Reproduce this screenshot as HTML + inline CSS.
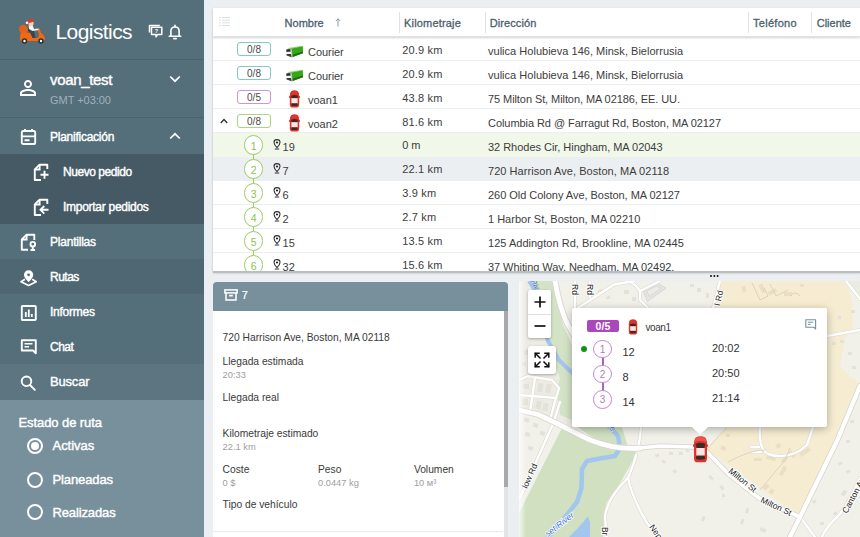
<!DOCTYPE html>
<html>
<head>
<meta charset="utf-8">
<style>
*{box-sizing:border-box;margin:0;padding:0}
html,body{width:860px;height:537px;overflow:hidden;background:#eceff1;font-family:"Liberation Sans",sans-serif;}
.abs{position:absolute}
#side{position:absolute;left:0;top:0;width:203.500px;height:537px;background:#546e7a;color:#fff;overflow:hidden}
#side .band{position:absolute;left:0;width:204px}
#side .t{position:absolute;white-space:nowrap;color:#fff;-webkit-text-stroke:0.4px #fff}
#side svg{position:absolute}
#tbl{position:absolute;left:213px;top:8px;width:647px;height:263.500px;background:#fff;overflow:hidden;box-shadow:0 1px 2px rgba(0,0,0,.25)}
#tbl .row{position:absolute;left:0;width:647px;height:24px;border-bottom:1px solid #e4e7e9}
#tbl .c{position:absolute;white-space:nowrap;font-size:11px;color:#3c3c3c;line-height:13px}
#tbl .h{color:#4a616c;-webkit-text-stroke:0.3px #4a616c}
.badge{position:absolute;left:24px;width:34px;height:13.500px;border:1px solid #80cbc4;border-radius:3px;font-size:10px;line-height:13px;text-align:center;color:#4a4a4a;background:#fff}
.circ{position:absolute;width:19.500px;height:19.500px;border:1.200px solid #9ccc65;border-radius:50%;font-size:10.500px;line-height:20px;text-align:center;color:#8bc34a;background:#fff}
#det{position:absolute;left:213px;top:281.500px;width:295px;height:256px;background:#fff;overflow:hidden;border-radius:3px 3px 0 0}
#det .l{position:absolute;white-space:nowrap;font-size:10.250px;line-height:12px;color:#3a3a3a}
#det .v{position:absolute;white-space:nowrap;font-size:9.300px;line-height:11px;color:#9e9e9e}
#map{position:absolute;left:519px;top:281px;width:341px;height:256px;background:#f1f0ea;overflow:hidden}
</style>
</head>
<body>
<div id="side">
  <div class="band" style="top:59px;height:1px;background:#4b636e"></div>
  <div class="band" style="top:117px;height:1px;background:#4b636e"></div>
  <div class="band" style="top:154px;height:70px;background:#455a64"></div>
  <div class="band" style="top:259px;height:35px;background:#4e6772"></div>
  <div class="band" style="top:364px;height:36px;background:#5c7581"></div>
  <div class="band" style="top:400px;height:137px;background:#78909c"></div>

  <div class="t" style="left:55.500px;top:19px;font-size:21px;line-height:26px;-webkit-text-stroke:0;letter-spacing:-0.58px">Logistics</div>
  <div class="t" style="left:50px;top:71px;font-size:15px;line-height:18px;letter-spacing:-0.34px">voan_test</div>
  <div class="t" style="left:50px;top:93.700px;font-size:11px;line-height:13px;color:#9fb1ba;-webkit-text-stroke:0;letter-spacing:-0.03px">GMT +03:00</div>
  <div class="t" style="left:50px;top:129.500px;font-size:12px;line-height:14px;letter-spacing:-0.25px">Planificación</div>
  <div class="t" style="left:63px;top:164.500px;font-size:12px;line-height:14px;letter-spacing:-0.45px">Nuevo pedido</div>
  <div class="t" style="left:63px;top:199.500px;font-size:12px;line-height:14px;letter-spacing:-0.28px">Importar pedidos</div>
  <div class="t" style="left:50px;top:234.500px;font-size:12px;line-height:14px;letter-spacing:-0.22px">Plantillas</div>
  <div class="t" style="left:50px;top:269.500px;font-size:12px;line-height:14px;letter-spacing:-0.5px">Rutas</div>
  <div class="t" style="left:50px;top:304.500px;font-size:12px;line-height:14px;letter-spacing:-0.24px">Informes</div>
  <div class="t" style="left:50px;top:339.500px;font-size:12px;line-height:14px;letter-spacing:-0.5px">Chat</div>
  <div class="t" style="left:50px;top:373.500px;font-size:13px;line-height:16px;letter-spacing:-0.18px">Buscar</div>
  <div class="t" style="left:18.500px;top:415px;font-size:13px;line-height:16px;letter-spacing:-0.08px">Estado de ruta</div>
  <div class="t" style="left:52.500px;top:438px;font-size:13px;line-height:16px;letter-spacing:-0.04px">Activas</div>
  <div class="t" style="left:52.500px;top:472px;font-size:13px;line-height:16px;letter-spacing:-0.11px">Planeadas</div>
  <div class="t" style="left:52.500px;top:504.500px;font-size:13px;line-height:16px;letter-spacing:-0.13px">Realizadas</div>

  <!-- logo scooter -->
  <svg style="left:17px;top:16px" width="30" height="30" viewBox="0 0 30 30">
    <ellipse cx="6.5" cy="13.5" rx="4.2" ry="4.8" fill="#e8601c" transform="rotate(-20 6.5 13.5)"/>
    <path d="M3 21.5 Q2.5 17 7 16.5 L13 17 L16 22 L21 22 L23 16.5 Q27.5 18 28 23.5 L26 25 L5 25 Q2.5 24.5 3 21.5Z" fill="#f4690f"/>
    <path d="M20 13 L22.5 12.5 L24.5 18 L22.5 19Z" fill="#f4690f"/>
    <circle cx="7.5" cy="25" r="2.7" fill="#263238"/><circle cx="7.5" cy="25" r="1.2" fill="#fff"/>
    <circle cx="24" cy="25" r="2.7" fill="#263238"/><circle cx="24" cy="25" r="1.2" fill="#fff"/>
    <path d="M11 10 L15 9.5 L17.5 17 L18.5 22 L15.5 22 L13.5 17 L11 15Z" fill="#37474f"/>
    <path d="M11.5 9.5 L15.5 9 L17 13 L21.5 12.5 L21.5 14 L15.5 15 L12 13Z" fill="#f5f5f5"/>
    <circle cx="14" cy="7.2" r="2.6" fill="#f7d2b8"/>
    <path d="M10.5 6.5 Q11.5 2.5 15 3 Q17 3.5 17 5.5 L11 7.5Z" fill="#e53a1d"/>
    <circle cx="10" cy="6.8" r="1.3" fill="#fff"/>
  </svg>
  <!-- chat multi icon -->
  <svg style="left:148px;top:24px" width="16" height="16" viewBox="0 0 16 16" fill="none" stroke="#fff" stroke-width="1.5">
    <path d="M3.5 3.2 H13.8 V10.5 H9.5 L8 12.8 V10.5 H3.5Z" stroke-linejoin="round"/>
    <path d="M11.8 1.5 H1.5 V8.5" stroke-linejoin="round"/>
    <text x="6.7" y="9.3" font-size="5.5" fill="#fff" stroke="none" font-family="Liberation Sans" font-weight="bold">?</text>
  </svg>
  <!-- bell -->
  <svg style="left:167px;top:22.500px" width="16" height="18" viewBox="0 0 16 18" fill="none" stroke="#fff" stroke-width="1.6">
    <path d="M2.2 13.2 H13.8 M3.9 13 V8.2 Q3.9 4 8 4 Q12.1 4 12.1 8.2 V13" stroke-linejoin="round" stroke-linecap="round"/>
    <path d="M8 3.8 V2.4" stroke-linecap="round"/>
    <path d="M6.9 15.6 H9.1" stroke-linecap="round" stroke-width="1.8"/>
  </svg>
  <!-- person -->
  <svg style="left:16.4px;top:76px" width="24" height="24" viewBox="0 0 24 24" fill="#fff">
    <path d="M12 5.9c1.16 0 2.1.94 2.1 2.1s-.94 2.1-2.1 2.1S9.900 9.160 9.900 8s.94-2.1 2.1-2.1m0 9c2.97 0 6.1 1.460 6.1 2.1v1.100H5.900V17c0-.64 3.130-2.1 6.1-2.1M12 4C9.790 4 8 5.790 8 8s1.790 4 4 4 4-1.790 4-4-1.790-4-4-4zm0 9c-2.670 0-8 1.340-8 4v3h16v-3c0-2.660-5.330-4-8-4z"/>
  </svg>
  <!-- chevrons -->
  <svg style="left:169px;top:75px" width="12" height="8" viewBox="0 0 12 8" fill="none" stroke="#fff" stroke-width="1.7"><path d="M1.2 1.5 L6 6.2 L10.800 1.5"/></svg>
  <svg style="left:169px;top:132px" width="12" height="8" viewBox="0 0 12 8" fill="none" stroke="#fff" stroke-width="1.7"><path d="M1.2 6.5 L6 1.8 L10.800 6.5"/></svg>
  <!-- calendar -->
  <svg style="left:20px;top:128px" width="17" height="18" viewBox="0 0 17 18" fill="none" stroke="#fff" stroke-width="1.9">
    <rect x="1.8" y="3" width="13.4" height="13" rx="1.6"/>
    <path d="M5 1 V4 M12 1 V4 M1.8 8.400 H15.2 M4.500 12.300 H9.500" />
  </svg>
  <!-- new order -->
  <svg style="left:33px;top:163px" width="17" height="19" viewBox="0 0 17 19" fill="none" stroke="#fff" stroke-width="1.9">
    <path d="M14.300 6 V1.8 H6.300 L1.800 6.300 V17 H8" stroke-linejoin="round"/>
    <path d="M6.600 2 V6.500 H2" />
    <path d="M7.500 11.800 H15.500 M11.500 7.800 V15.800"/>
  </svg>
  <!-- import -->
  <svg style="left:33px;top:198px" width="17" height="19" viewBox="0 0 17 19" fill="none" stroke="#fff" stroke-width="1.9">
    <path d="M14.300 6 V1.8 H6.300 L1.800 6.300 V17 H8" stroke-linejoin="round"/>
    <path d="M6.600 2 V6.500 H2" />
    <path d="M7.500 11.800 H15.500 M11.300 8 L7.500 11.800 L11.300 15.600"/>
  </svg>
  <!-- plantillas -->
  <svg style="left:20px;top:233px" width="18" height="19" viewBox="0 0 18 19" fill="none" stroke="#fff" stroke-width="1.9">
    <path d="M14.300 7 V1.8 H6.300 L1.800 6.300 V16.800 H8" stroke-linejoin="round"/>
    <path d="M6.600 2 V6.500 H2" />
    <circle cx="12.800" cy="11.200" r="2.300"/>
    <path d="M12.800 13.500 V16.800 M10.500 17 H15.100"/>
  </svg>
  <!-- rutas -->
  <svg style="left:19px;top:269.800px" width="20" height="17" viewBox="0 0 20 17" fill="none" stroke="#fff" stroke-width="1.7">
    <path d="M9.600 1.200 C12 1.200 13.400 3 13.400 4.700 C13.400 7 9.600 11 9.600 11 C9.600 11 5.800 7 5.800 4.700 C5.800 3 7.200 1.200 9.600 1.200Z" fill="#fff"/>
    <circle cx="9.600" cy="4.800" r="1.400" fill="#4e6772" stroke="none"/>
    <path d="M6 9.200 L2 11.800 L9.600 15.500 L17.200 11.800 L13.200 9.200" stroke-linejoin="round"/>
  </svg>
  <!-- informes -->
  <svg style="left:20px;top:304px" width="18" height="18" viewBox="0 0 18 18" fill="none" stroke="#fff" stroke-width="1.9">
    <rect x="1.800" y="2" width="14" height="14" rx="0.8"/>
    <path d="M5.800 13 V8 M8.800 13 V5.500 M11.800 13 V10" stroke-width="1.8"/>
  </svg>
  <!-- chat -->
  <svg style="left:20px;top:338px" width="18" height="18" viewBox="0 0 18 18" fill="none" stroke="#fff" stroke-width="1.9">
    <path d="M1.800 2.300 H15.800 V15.200 L13 12.500 H1.800Z" stroke-linejoin="round"/>
    <path d="M4.500 5.800 H12.500 M4.500 8.800 H9" stroke-width="1.6"/>
  </svg>
  <!-- search -->
  <svg style="left:19px;top:373px" width="18" height="18" viewBox="0 0 18 18" fill="none" stroke="#fff" stroke-width="1.9">
    <circle cx="7.500" cy="8.300" r="4.800"/>
    <path d="M11 12 L15.800 16.800" stroke-linecap="round"/>
  </svg>
  <!-- radios -->
  <div style="position:absolute;left:27px;top:438px;width:16px;height:16px;border:2px solid #fff;border-radius:50%"></div>
  <div style="position:absolute;left:31px;top:442px;width:8px;height:8px;background:#fff;border-radius:50%"></div>
  <div style="position:absolute;left:27px;top:472px;width:16px;height:16px;border:2px solid #fff;border-radius:50%"></div>
  <div style="position:absolute;left:27px;top:504px;width:16px;height:16px;border:2px solid #fff;border-radius:50%"></div>
</div>

<div id="tbl">
<div class="abs" style="left:0;top:0;width:647px;height:29px;background:#fff;border-bottom:1px solid #dfe3e6;box-shadow:0 1px 2px rgba(0,0,0,.18)"></div>
<svg class="abs" style="left:6px;top:7.500px" width="11.500" height="11" viewBox="0 0 13 12" stroke="#d3dade" stroke-width="1" fill="none"><path d="M0 1.500 H2 M3.500 1.500 H12.500 M0 4.500 H2 M3.500 4.500 H12.500 M0 7.500 H2 M3.500 7.500 H12.500 M0 10.500 H2 M3.500 10.500 H12.500"/></svg>
<div class="c h" style="margin-top:0.800px;left:71.6px;top:8.4px;letter-spacing:0px">Nombre</div>
<div class="c h" style="margin-top:0.800px;left:191px;top:8.4px;letter-spacing:0.18px">Kilometraje</div>
<div class="c h" style="margin-top:0.800px;left:276.7px;top:8.4px;letter-spacing:0.1px">Dirección</div>
<div class="c h" style="margin-top:0.800px;left:540px;top:8.4px;letter-spacing:0.28px">Teléfono</div>
<div class="c h" style="margin-top:0.800px;left:603.7px;top:8.4px;letter-spacing:0.01px">Cliente</div>
<svg class="abs" style="left:121.500px;top:9.500px" width="6" height="9" viewBox="0 0 6 9" fill="none" stroke="#78909c" stroke-width="0.900"><path d="M3 8.500 V0.800 M0.800 3 L3 0.800 L5.200 3"/></svg>
<div class="abs" style="left:186px;top:4px;width:1px;height:21px;background:#dfe3e6"></div>
<div class="abs" style="left:272.3px;top:4px;width:1px;height:21px;background:#dfe3e6"></div>
<div class="abs" style="left:534.8px;top:4px;width:1px;height:21px;background:#dfe3e6"></div>
<div class="abs" style="left:598.4px;top:4px;width:1px;height:21px;background:#dfe3e6"></div>
<div class="abs" style="left:0;top:52.5px;width:647px;height:1px;background:#eceeef;margin-top:-0.800px"></div>
<div class="badge" style="top:34px;border-color:#80cbc4">0/8</div>
<svg style="position:absolute;left:72px;top:38px" width="19" height="12" viewBox="0 0 19 12">
<path d="M1.200 3.500 L4.200 1.700 L16.200 0 L17.800 0.400 L5.500 2.900Z" fill="#8fdc6c"/>
<path d="M5.500 2.800 L17.800 0.300 L18 7 L6.500 11.200Z" fill="#35a818"/>
<path d="M6.200 9 L18 5.400 L18 7.200 L6.500 11.400Z" fill="#1f6e10"/>
<path d="M1.300 3.600 L5.500 2.900 L5.800 5.700 L1.400 6.100Z" fill="#2b2b2b"/>
<path d="M1.400 6.100 L5.800 5.700 L6 7.900 L1.500 7.900Z" fill="#f2f2f2"/>
<path d="M1.500 7.900 L6 7.900 L6.500 11.300 L1.600 9.600Z" fill="#3a3a3a"/>
<path d="M5.500 2.900 L6.700 3.300 L7.600 10.800 L6.500 11.300Z" fill="#c9d3c9"/>
</svg>
<div class="c" style="left:95px;top:37.7px;letter-spacing:-0.05px">Courier</div>
<div class="c" style="left:189.2px;top:35.7px;letter-spacing:0.17px">20.9 km</div>
<div class="c" style="left:275px;top:37.2px;letter-spacing:0.02px">vulica Holubieva 146, Minsk, Bielorrusia</div>
<div class="abs" style="left:0;top:76.5px;width:647px;height:1px;background:#eceeef;margin-top:-0.800px"></div>
<div class="badge" style="top:58px;border-color:#80cbc4">0/8</div>
<svg style="position:absolute;left:72px;top:62px" width="19" height="12" viewBox="0 0 19 12">
<path d="M1.200 3.500 L4.200 1.700 L16.200 0 L17.800 0.400 L5.500 2.900Z" fill="#8fdc6c"/>
<path d="M5.500 2.800 L17.800 0.300 L18 7 L6.500 11.200Z" fill="#35a818"/>
<path d="M6.200 9 L18 5.400 L18 7.200 L6.500 11.400Z" fill="#1f6e10"/>
<path d="M1.300 3.600 L5.500 2.900 L5.800 5.700 L1.400 6.100Z" fill="#2b2b2b"/>
<path d="M1.400 6.100 L5.800 5.700 L6 7.900 L1.500 7.900Z" fill="#f2f2f2"/>
<path d="M1.500 7.900 L6 7.900 L6.500 11.300 L1.600 9.600Z" fill="#3a3a3a"/>
<path d="M5.500 2.900 L6.700 3.300 L7.600 10.800 L6.500 11.300Z" fill="#c9d3c9"/>
</svg>
<div class="c" style="left:95px;top:61.7px;letter-spacing:-0.05px">Courier</div>
<div class="c" style="left:189.2px;top:59.7px;letter-spacing:0.17px">20.9 km</div>
<div class="c" style="left:275px;top:61.2px;letter-spacing:0.02px">vulica Holubieva 146, Minsk, Bielorrusia</div>
<div class="abs" style="left:0;top:100.5px;width:647px;height:1px;background:#eceeef;margin-top:-0.800px"></div>
<div class="badge" style="top:82px;border-color:#ce93d8">0/5</div>
<svg style="position:absolute;left:76.3px;top:81.5px" width="11" height="18" viewBox="0 0 11 18">
<path d="M2.200 1.200 Q5.500 -0.600 8.800 1.200 Q10.300 2.500 10.200 6 L10.200 14.500 Q10.200 17 8.500 17.400 L2.500 17.400 Q0.800 17 0.800 14.500 L0.800 6 Q0.700 2.500 2.200 1.200Z" fill="#e0342b"/>
<path d="M2 5.800 Q5.500 4.200 9 5.800 L8.400 8.200 L2.600 8.200Z" fill="#3b2b2b"/>
<rect x="2.400" y="8.200" width="6.200" height="5" fill="#fbe9e7"/>
<path d="M2.500 13.400 L8.500 13.400 L8.800 15.400 Q5.500 16.400 2.200 15.400Z" fill="#3b2b2b"/>
<rect x="0" y="6.200" width="1.200" height="1.600" fill="#c62828"/><rect x="9.800" y="6.200" width="1.200" height="1.600" fill="#c62828"/>
</svg>
<div class="c" style="left:95px;top:85.7px;letter-spacing:0px">voan1</div>
<div class="c" style="left:189.2px;top:83.7px;letter-spacing:0.17px">43.8 km</div>
<div class="c" style="left:275px;top:85.2px;letter-spacing:-0.08px">75 Milton St, Milton, MA 02186, EE. UU.</div>
<div class="abs" style="left:0;top:124.5px;width:647px;height:1px;background:#eceeef;margin-top:-0.800px"></div>
<div class="badge" style="top:106px;border-color:#aed581">0/8</div>
<svg style="position:absolute;left:76.3px;top:105.5px" width="11" height="18" viewBox="0 0 11 18">
<path d="M2.200 1.200 Q5.500 -0.600 8.800 1.200 Q10.300 2.500 10.200 6 L10.200 14.500 Q10.200 17 8.500 17.400 L2.500 17.400 Q0.800 17 0.800 14.500 L0.800 6 Q0.700 2.500 2.200 1.200Z" fill="#e0342b"/>
<path d="M2 5.800 Q5.500 4.200 9 5.800 L8.400 8.200 L2.600 8.200Z" fill="#3b2b2b"/>
<rect x="2.400" y="8.200" width="6.200" height="5" fill="#fbe9e7"/>
<path d="M2.500 13.400 L8.500 13.400 L8.800 15.400 Q5.500 16.400 2.200 15.400Z" fill="#3b2b2b"/>
<rect x="0" y="6.200" width="1.200" height="1.600" fill="#c62828"/><rect x="9.800" y="6.200" width="1.200" height="1.600" fill="#c62828"/>
</svg>
<div class="c" style="left:95px;top:109.7px;letter-spacing:0px">voan2</div>
<div class="c" style="left:189.2px;top:107.7px;letter-spacing:0.17px">81.6 km</div>
<div class="c" style="left:275px;top:109.2px;letter-spacing:-0.06px">Columbia Rd @ Farragut Rd, Boston, MA 02127</div>
<svg class="abs" style="left:7px;top:109.7px" width="8" height="6" viewBox="0 0 8 6" fill="none" stroke="#333" stroke-width="1.400"><path d="M0.800 5 L4 1.600 L7.200 5"/></svg>
<div class="abs" style="left:0;top:125px;width:647px;height:24px;background:#f1f8e9"></div>
<div class="abs" style="left:0;top:149px;width:647px;height:24px;background:#eceff1"></div>
<div class="abs" style="left:0;top:173px;width:647px;height:24px;background:#fff;border-bottom:1px solid #eceeef"></div>
<div class="abs" style="left:0;top:197px;width:647px;height:24px;background:#fff;border-bottom:1px solid #eceeef"></div>
<div class="abs" style="left:0;top:221px;width:647px;height:24px;background:#fff;border-bottom:1px solid #eceeef"></div>
<div class="abs" style="left:0;top:245px;width:647px;height:24px;background:#fff;border-bottom:1px solid #eceeef"></div>
<div class="abs" style="left:39.8px;top:146px;width:1.500px;height:6px;background:#9ccc65"></div>
<div class="circ" style="left:30.8px;top:127.2px">1</div>
<svg style="position:absolute;left:60.3px;top:131.2px" width="8" height="11" viewBox="0 0 8 11" fill="none" stroke="#2a2a2a" stroke-width="1.050">
<path d="M4 0.600 C6 0.600 7 2 7 3.400 C7 5.400 4 8.600 4 8.600 C4 8.600 1 5.400 1 3.400 C1 2 2 0.600 4 0.600Z"/>
<circle cx="4" cy="3.500" r="1.100" fill="#222" stroke="none"/>
<path d="M1.800 10 H6.200" stroke-width="1"/>
</svg>
<div class="c" style="left:69.6px;top:133.3px">19</div>
<div class="c" style="left:189.2px;top:131.0px;letter-spacing:0px">0 m</div>
<div class="c" style="left:275px;top:132.5px;letter-spacing:-0.03px">32 Rhodes Cir, Hingham, MA 02043</div>
<div class="abs" style="left:39.8px;top:170px;width:1.500px;height:6px;background:#9ccc65"></div>
<div class="circ" style="left:30.8px;top:151.2px">2</div>
<svg style="position:absolute;left:60.3px;top:155.2px" width="8" height="11" viewBox="0 0 8 11" fill="none" stroke="#2a2a2a" stroke-width="1.050">
<path d="M4 0.600 C6 0.600 7 2 7 3.400 C7 5.400 4 8.600 4 8.600 C4 8.600 1 5.400 1 3.400 C1 2 2 0.600 4 0.600Z"/>
<circle cx="4" cy="3.500" r="1.100" fill="#222" stroke="none"/>
<path d="M1.800 10 H6.200" stroke-width="1"/>
</svg>
<div class="c" style="left:69.6px;top:157.3px">7</div>
<div class="c" style="left:189.2px;top:155.0px;letter-spacing:0.17px">22.1 km</div>
<div class="c" style="left:275px;top:156.5px;letter-spacing:0.05px">720 Harrison Ave, Boston, MA 02118</div>
<div class="abs" style="left:39.8px;top:194px;width:1.500px;height:6px;background:#9ccc65"></div>
<div class="circ" style="left:30.8px;top:175.2px">3</div>
<svg style="position:absolute;left:60.3px;top:179.2px" width="8" height="11" viewBox="0 0 8 11" fill="none" stroke="#2a2a2a" stroke-width="1.050">
<path d="M4 0.600 C6 0.600 7 2 7 3.400 C7 5.400 4 8.600 4 8.600 C4 8.600 1 5.400 1 3.400 C1 2 2 0.600 4 0.600Z"/>
<circle cx="4" cy="3.500" r="1.100" fill="#222" stroke="none"/>
<path d="M1.800 10 H6.200" stroke-width="1"/>
</svg>
<div class="c" style="left:69.6px;top:181.3px">6</div>
<div class="c" style="left:189.2px;top:179.0px;letter-spacing:0.17px">3.9 km</div>
<div class="c" style="left:275px;top:180.5px;letter-spacing:-0.03px">260 Old Colony Ave, Boston, MA 02127</div>
<div class="abs" style="left:39.8px;top:218px;width:1.500px;height:6px;background:#9ccc65"></div>
<div class="circ" style="left:30.8px;top:199.2px">4</div>
<svg style="position:absolute;left:60.3px;top:203.2px" width="8" height="11" viewBox="0 0 8 11" fill="none" stroke="#2a2a2a" stroke-width="1.050">
<path d="M4 0.600 C6 0.600 7 2 7 3.400 C7 5.400 4 8.600 4 8.600 C4 8.600 1 5.400 1 3.400 C1 2 2 0.600 4 0.600Z"/>
<circle cx="4" cy="3.500" r="1.100" fill="#222" stroke="none"/>
<path d="M1.800 10 H6.200" stroke-width="1"/>
</svg>
<div class="c" style="left:69.6px;top:205.3px">2</div>
<div class="c" style="left:189.2px;top:203.0px;letter-spacing:0.17px">2.7 km</div>
<div class="c" style="left:275px;top:204.5px;letter-spacing:0px">1 Harbor St, Boston, MA 02210</div>
<div class="abs" style="left:39.8px;top:242px;width:1.500px;height:6px;background:#9ccc65"></div>
<div class="circ" style="left:30.8px;top:223.2px">5</div>
<svg style="position:absolute;left:60.3px;top:227.2px" width="8" height="11" viewBox="0 0 8 11" fill="none" stroke="#2a2a2a" stroke-width="1.050">
<path d="M4 0.600 C6 0.600 7 2 7 3.400 C7 5.400 4 8.600 4 8.600 C4 8.600 1 5.400 1 3.400 C1 2 2 0.600 4 0.600Z"/>
<circle cx="4" cy="3.500" r="1.100" fill="#222" stroke="none"/>
<path d="M1.800 10 H6.200" stroke-width="1"/>
</svg>
<div class="c" style="left:69.6px;top:229.3px">15</div>
<div class="c" style="left:189.2px;top:227.0px;letter-spacing:0.17px">13.5 km</div>
<div class="c" style="left:275px;top:228.5px;letter-spacing:0.02px">125 Addington Rd, Brookline, MA 02445</div>
<div class="circ" style="left:30.8px;top:247.2px">6</div>
<svg style="position:absolute;left:60.3px;top:251.2px" width="8" height="11" viewBox="0 0 8 11" fill="none" stroke="#2a2a2a" stroke-width="1.050">
<path d="M4 0.600 C6 0.600 7 2 7 3.400 C7 5.400 4 8.600 4 8.600 C4 8.600 1 5.400 1 3.400 C1 2 2 0.600 4 0.600Z"/>
<circle cx="4" cy="3.500" r="1.100" fill="#222" stroke="none"/>
<path d="M1.800 10 H6.200" stroke-width="1"/>
</svg>
<div class="c" style="left:69.6px;top:253.3px">32</div>
<div class="c" style="left:189.2px;top:251.0px;letter-spacing:0.17px">15.6 km</div>
<div class="c" style="left:275px;top:252.5px;letter-spacing:-0.06px">37 Whiting Way, Needham, MA 02492.</div>
</div>

<div class="abs" style="left:213px;top:271px;width:647px;height:1.500px;background:#b9bec1"></div>
<div class="abs" style="left:709.500px;top:275.300px;width:2.200px;height:2.200px;border-radius:50%;background:#111;box-shadow:3.300px 0 0 #111,6.600px 0 0 #111"></div>
<div id="det">
<div class="abs" style="left:0;top:0;width:295px;height:29px;background:#78909c;border-radius:3px 3px 0 0"></div>
<svg class="abs" style="left:10.5px;top:7.7px" width="14" height="12" viewBox="0 0 14 12" fill="none" stroke="#fff" stroke-width="1.500"><rect x="0.900" y="0.900" width="12.200" height="3"/><path d="M2 4 V11 H12 V4"/><path d="M5.200 6.600 H8.800" stroke-width="1.600"/></svg>
<div class="abs" style="left:28.7px;top:7.0px;font-size:11px;line-height:13px;color:#fff;letter-spacing:-0.5px;-webkit-text-stroke:0.2px #fff">7</div>
<div class="l" style="left:9.6px;top:50.15px;letter-spacing:0px">720 Harrison Ave, Boston, MA 02118</div>
<div class="l" style="left:9.6px;top:74.45px;letter-spacing:0px">Llegada estimada</div>
<div class="v" style="left:9.6px;top:88.48px;letter-spacing:0px">20:33</div>
<div class="l" style="left:9.6px;top:110.45px;letter-spacing:0px">Llegada real</div>
<div class="l" style="left:9.6px;top:146.95px;letter-spacing:0px">Kilometraje estimado</div>
<div class="v" style="left:9.6px;top:160.68px;letter-spacing:0px">22.1 km</div>
<div class="l" style="left:9.6px;top:182.05px;letter-spacing:0px">Coste</div>
<div class="l" style="left:105.0px;top:182.05px;letter-spacing:0px">Peso</div>
<div class="l" style="left:200.9px;top:182.05px;letter-spacing:0px">Volumen</div>
<div class="v" style="left:9.6px;top:196.28px;letter-spacing:0px">0 $</div>
<div class="v" style="left:105.0px;top:196.28px;letter-spacing:0px">0.0447 kg</div>
<div class="v" style="left:200.9px;top:196.28px;letter-spacing:0px">10 м³</div>
<div class="l" style="left:9.6px;top:217.95px;letter-spacing:0px">Tipo de vehículo</div>
<div class="abs" style="left:0;top:249px;width:290px;height:1px;background:#e9e9e9"></div>
<div class="abs" style="left:290.8px;top:29.5px;width:4px;height:176px;background:#a9a9a9"></div>
<div class="abs" style="left:290.8px;top:205.5px;width:4px;height:50px;background:#e4e4e4"></div>
</div>

<div id="map">
<svg class="abs" style="left:0;top:0" width="341" height="256" viewBox="519 281 341 256">
<rect x="519" y="281" width="341" height="256" fill="#f1f0e9"/>
<path d="M519 281 H552 L566 330 L572 345 V431 L519 409Z" fill="#ecebe4"/>
<path d="M722 281 H846 L852 300 L853 331 L845 338 L840 367 L860 384 V386 L800 517 L707 450 L727 427 L715 307Z" fill="#f6ecd1"/>
<path d="M848 281 H860 V300Z" fill="#ecebe2"/>
<path d="M546 281 L553 281 L563 325 L572 345 V420 L560 415 L557 390 L560 378 L548 345 L542 320 L535 295 L529 281Z" fill="#d4e3c6"/>
<path d="M563 426 L598 443 L636 452 L632 462 L620 483 L606 503 L603 537 H519 V513Z" fill="#d0e0c1"/>
<path d="M578 427 H622 L628 447 L596 440Z" fill="#d0e0c1"/>
<path d="M529 281 L536 292 L541 318 L548 341 L559 360 L570 371 L580 380" fill="none" stroke="#a3c6ef" stroke-width="4" stroke-linejoin="round"/>
<path d="M608 425 L618 436 L620 448 L615 456 L600 458.500 L587 461 L582 469 L581.500 488 L577 502 L566 516 L548 537" fill="none" stroke="#a3c6ef" stroke-width="4.500" stroke-linejoin="round" stroke-linecap="round"/>
<path d="M588 516.500 L577 529 L569 537 H590 L590 522Z" fill="#a3c6ef"/>
<!-- buildings -->
<g fill="#e6e4dc" stroke="#cfcfdc" stroke-width="0.800">
<path d="M642.800 290 L656.700 282.700 L666 288.200 L647.400 301.300Z"/><path d="M646.500 291 L656.500 285.700 L661 288.500 L649.500 296.500Z" fill="#ecebe4"/>
</g>
<g fill="#e3e1d9">
<rect x="598" y="290" width="5" height="4" transform="rotate(-30 600 292)"/><rect x="624" y="290" width="5" height="4"/><rect x="632" y="297" width="4" height="4"/><rect x="606" y="296" width="4" height="3" transform="rotate(-30 608 297)"/>
<rect x="690" y="284" width="4" height="3"/><rect x="697" y="288" width="4" height="4"/><rect x="706" y="293" width="3" height="5"/>
<rect x="655" y="454" width="4" height="3" transform="rotate(-20 657 455)"/><rect x="662" y="460" width="4" height="3" transform="rotate(30 664 461)"/><rect x="673" y="470" width="4" height="3" transform="rotate(40 675 471)"/><rect x="669" y="452" width="4" height="3"/><rect x="679" y="452" width="4" height="3"/><rect x="686" y="449" width="3" height="3"/>
<rect x="709" y="476" width="5" height="3" transform="rotate(45 711 477)"/><rect x="720" y="486" width="5" height="3" transform="rotate(50 722 487)"/><rect x="722" y="494" width="3" height="3"/><rect x="746" y="508" width="3" height="5" transform="rotate(20 747 510)"/><rect x="741" y="519" width="3" height="5" transform="rotate(20 742 521)"/><rect x="702" y="516" width="3" height="5" transform="rotate(20 703 518)"/><rect x="760" y="528" width="6" height="4" transform="rotate(20 763 530)"/>
<rect x="812" y="500" width="4" height="3" transform="rotate(-30 814 501)"/><rect x="833" y="512" width="4" height="3" transform="rotate(-30 835 513)"/><rect x="846" y="470" width="4" height="3" transform="rotate(-30 848 471)"/><rect x="838" y="462" width="4" height="3" transform="rotate(-30 840 463)"/><rect x="842" y="490" width="4" height="6" transform="rotate(30 844 493)"/><rect x="820" y="522" width="4" height="3"/><rect x="846" y="440" width="4" height="3"/><rect x="850" y="420" width="4" height="3"/>
<rect x="848" y="352" width="4" height="3"/><rect x="852" y="366" width="4" height="3"/><rect x="838" y="316" width="3" height="3"/><rect x="851" y="310" width="4" height="3"/><rect x="832" y="342" width="4" height="3"/><rect x="840" y="340" width="4" height="3"/>
<rect x="523" y="384" width="6" height="5"/><rect x="538" y="383" width="5" height="9" transform="rotate(10 540 387)"/><rect x="546" y="384" width="5" height="9" transform="rotate(10 548 388)"/><rect x="522" y="399" width="6" height="6"/><rect x="536" y="401" width="5" height="8" transform="rotate(10 538 405)"/><rect x="543" y="403" width="5" height="8" transform="rotate(10 545 407)"/>
<rect x="524" y="418" width="5" height="4" transform="rotate(15 526 420)"/><rect x="533" y="423" width="5" height="4" transform="rotate(20 535 425)"/><rect x="525" y="432" width="5" height="4" transform="rotate(20 527 434)"/><rect x="528" y="446" width="5" height="4" transform="rotate(20 530 448)"/><rect x="540" y="431" width="5" height="4" transform="rotate(20 542 433)"/>
<rect x="524" y="350" width="4" height="5"/><rect x="522" y="362" width="4" height="4"/><rect x="560" y="290" width="0" height="0"/>
</g>
<g fill="#ebdfc3">
<rect x="721" y="446" width="5" height="4" transform="rotate(30 723 448)"/><rect x="726" y="434" width="4" height="3"/>
<rect x="776" y="444" width="5" height="4" transform="rotate(-30 778 446)"/><rect x="783" y="456" width="4" height="7" transform="rotate(35 785 459)"/><rect x="790" y="450" width="4" height="8" transform="rotate(-40 792 454)"/><rect x="803" y="446" width="4" height="12" transform="rotate(55 805 452)"/><rect x="781" y="466" width="4" height="10" transform="rotate(30 783 471)"/><rect x="764" y="484" width="4" height="6" transform="rotate(50 766 487)"/><rect x="770" y="489" width="4" height="5" transform="rotate(30 772 491)"/><rect x="754" y="458" width="8" height="3"/><rect x="766" y="456" width="10" height="4" transform="rotate(15 771 458)"/>
<rect x="742" y="286" width="4" height="6" transform="rotate(-20 744 289)"/><rect x="760" y="284" width="4" height="9" transform="rotate(-25 762 288)"/><rect x="768" y="290" width="9" height="4" transform="rotate(-25 772 292)"/><rect x="784" y="292" width="8" height="4"/><rect x="800" y="284" width="4" height="3"/>
</g>
<g fill="none" stroke="#d0cbbb" stroke-width="0.800">
<path d="M752 283 L760 300 L768 296 L764 288 M770 284 L776 296 L788 290 M790 296 Q796 290 800 296"/>
</g>
<g fill="none" stroke="#dcdad2" stroke-width="3.600" stroke-linecap="round" stroke-linejoin="round">
<path d="M575 281 V307"/><path d="M590 281 V297"/><path d="M578 308 L614 284.500 L634 281"/><path d="M629 281 Q639 287 640 292 L640 300 L648 308"/><path d="M640 291 L660 281"/>
<path d="M720 281 L713 308"/>
<path d="M519 380 L528 376 L552 380 L559 388 L554 405 L550 420"/><path d="M535 378 L530 412"/><path d="M519 395 L556 398"/>
<path d="M519 500 L553 424 L560 402"/>
<path d="M641 427 Q640 440 638 447"/><path d="M636 455 Q634 464 628 478 Q608 497 605 516 L606.500 537"/><path d="M628 478 Q631 495 647 523 L659 537"/>
<path d="M846 281 L860 299"/><path d="M827 336 L860 330"/>
<path d="M860 478 Q848 505 838 516 Q826 527 822 537"/><path d="M800 517 L815 537"/>
<path d="M760 427 Q758 448 768 454 Q790 461 807 445 L813 427"/><path d="M751 447 H759"/><path d="M752 452 H761"/>
</g>
<g fill="none" stroke="#fff" stroke-width="2.400" stroke-linecap="round" stroke-linejoin="round">
<path d="M575 281 V307"/><path d="M590 281 V297"/><path d="M578 308 L614 284.500 L634 281"/><path d="M629 281 Q639 287 640 292 L640 300 L648 308"/><path d="M640 291 L660 281"/>
<path d="M720 281 L713 308"/>
<path d="M519 380 L528 376 L552 380 L559 388 L554 405 L550 420"/><path d="M535 378 L530 412"/><path d="M519 395 L556 398"/>
<path d="M519 500 L553 424 L560 402"/>
<path d="M641 427 Q640 440 638 447"/><path d="M636 455 Q634 464 628 478 Q608 497 605 516 L606.500 537"/><path d="M628 478 Q631 495 647 523 L659 537"/>
<path d="M846 281 L860 299"/><path d="M827 336 L860 330"/>
<path d="M860 478 Q848 505 838 516 Q826 527 822 537"/><path d="M800 517 L815 537"/>
<path d="M760 427 Q758 448 768 454 Q790 461 807 445 L813 427"/><path d="M751 447 H759"/><path d="M752 452 H761"/>
</g>
<g fill="none" stroke="#d9d4c4" stroke-width="1">
<path d="M707 449 L727 427"/><path d="M728 462 Q750 450 765 450"/><path d="M760 490 L785 460 L790 448"/>
</g>
<g fill="none" stroke="#d6d4cc" stroke-width="6.400" stroke-linecap="round" stroke-linejoin="round">
<path d="M555 281 Q560 310 568 325 L580 345"/>
<path d="M519 410 L538 414.500 L556 423 L590 440 Q615 450 640 448"/>
<path d="M860 386 L837 441 L800 517 L790 537" stroke-width="5.800"/>
<path d="M640 448 L660 446 L693 447 L707 452 L729 474.500 L759.500 498.500 L800 517" stroke-width="5.200"/>
</g>
<g fill="none" stroke="#fff" stroke-width="4.800" stroke-linecap="round" stroke-linejoin="round">
<path d="M555 281 Q560 310 568 325 L580 345"/>
<path d="M519 410 L538 414.500 L556 423 L590 440 Q615 450 640 448"/>
<path d="M860 386 L837 441 L800 517 L790 537" stroke-width="4.300"/>
<path d="M640 448 L660 446 L693 447 L707 452 L729 474.500 L759.500 498.500 L800 517" stroke-width="3.700"/>
</g>
<!-- labels -->
<g font-family="Liberation Sans" font-size="8.500" fill="#222" stroke="#fff" stroke-width="2" paint-order="stroke" stroke-linejoin="round">
<text transform="translate(728 472) rotate(39)">Milton St</text>
<text transform="translate(760 502) rotate(25)">Milton St</text>
<text transform="translate(847 514) rotate(-62)">Canton Av</text>
<text transform="translate(527 489) rotate(-66)">low Rd</text>
<text transform="translate(602 527) rotate(90)">Br</text>
<text transform="translate(649 527) rotate(55)">Nep</text>
<text transform="translate(572 284) rotate(90)">Rd</text>
<text transform="translate(587 284) rotate(90)">Rd</text>
<text transform="translate(720 306) rotate(-78)">l Rd</text>
</g>
<g font-family="Liberation Sans" font-size="8.500" font-style="italic" fill="#3d6fd0" stroke="#fff" stroke-width="1.500" paint-order="stroke">
<text transform="translate(548 537) rotate(-38)">set River</text>
<text transform="translate(531 281) rotate(62)" stroke="none" font-size="7">Riv</text>
<text transform="translate(609 428) rotate(60)" stroke-width="1">e</text>
</g>
</svg>
<div class="abs" style="left:0;top:0;width:7px;height:256px;background:linear-gradient(90deg,rgba(255,255,255,.75),rgba(255,255,255,0))"></div>
<div class="abs" style="left:8.7px;top:9px;width:23.500px;height:47.500px;background:#fff;border-radius:2px;box-shadow:0 1px 3px rgba(0,0,0,.3)"></div>
<div class="abs" style="left:8.7px;top:32.5px;width:23.500px;height:1px;background:#e0e0e0"></div>
<svg class="abs" style="left:14.5px;top:14.5px" width="12" height="12" viewBox="0 0 12 12" stroke="#111" stroke-width="1.700" fill="none"><path d="M0.500 6 H11.500 M6 0.500 V11.500"/></svg>
<svg class="abs" style="left:14.5px;top:42.5px" width="12" height="4" viewBox="0 0 12 4" stroke="#111" stroke-width="1.700" fill="none"><path d="M0.500 2 H11.500"/></svg>
<div class="abs" style="left:8.8px;top:65px;width:28px;height:28px;background:#fff;border-radius:3px;box-shadow:0 1px 3px rgba(0,0,0,.3)"></div>
<svg class="abs" style="left:15px;top:71px" width="16" height="16" viewBox="0 0 16 16" stroke="#111" stroke-width="1.500" fill="none" stroke-linecap="square"><path d="M1.500 1.500 L6 6 M14.500 1.500 L10 6 M1.500 14.500 L6 10 M14.500 14.500 L10 10"/><path d="M1.200 5 V1.200 H5 M11 1.200 H14.800 V5 M1.200 11 V14.800 H5 M11 14.800 H14.800 V11"/></svg>
<div class="abs" style="left:53.2px;top:26.5px;width:255px;height:119.500px;background:#fff;border-radius:2px;box-shadow:0 2px 8px rgba(0,0,0,.3)"></div>
<svg class="abs" style="left:172.6px;top:145.5px" width="16" height="8" viewBox="0 0 16 8"><path d="M0 0 H16 L8 7.500Z" fill="#fff"/></svg>
<div class="abs" style="left:68px;top:39px;width:32px;height:12px;background:#ab47bc;border-radius:2px;color:#fff;font-size:10.500px;font-weight:bold;line-height:12.500px;letter-spacing:0.2px;text-align:center">0/5</div>
<svg class="abs" style="left:108.8px;top:37.8px" width="10" height="16" viewBox="0 0 11 18">
<path d="M2.200 1.200 Q5.500 -0.600 8.800 1.200 Q10.300 2.500 10.200 6 L10.200 14.500 Q10.200 17 8.500 17.400 L2.500 17.400 Q0.800 17 0.800 14.500 L0.800 6 Q0.700 2.500 2.200 1.200Z" fill="#e0342b"/>
<path d="M2 5.800 Q5.500 4.200 9 5.800 L8.400 8.200 L2.600 8.200Z" fill="#3b2b2b"/>
<rect x="2.400" y="8.200" width="6.200" height="5" fill="#fbe9e7"/>
<path d="M2.500 13.400 L8.500 13.400 L8.800 15.400 Q5.500 16.400 2.200 15.400Z" fill="#3b2b2b"/>
</svg>
<div class="abs" style="left:126.5px;top:40.5px;font-size:10px;line-height:12px;color:#3a3a3a;white-space:nowrap;letter-spacing:-0.45px">voan1</div>
<svg class="abs" style="left:286.2px;top:38.4px" width="12" height="11" viewBox="0 0 12 11" fill="none" stroke="#78909c" stroke-width="1.100"><path d="M0.800 0.800 H10.600 V10 L8.800 8.200 H0.800Z" stroke-linejoin="round"/><path d="M2.800 3.200 H8.200 M2.800 5.400 H5.600" stroke-width="1"/></svg>
<div class="abs" style="left:62px;top:65px;width:6px;height:6px;border-radius:50%;background:#16901a"></div>
<div class="abs" style="left:82.7px;top:69px;width:2px;height:52px;background:#a565b8"></div>
<div class="abs" style="left:74.25px;top:58.55px;width:18.500px;height:18.500px;border:1px solid #c58ad3;border-radius:50%;background:#fff;color:#b27cc2;font-size:10px;line-height:17.500px;text-align:center">1</div>
<div class="abs" style="left:103.5px;top:64.5px;font-size:11px;line-height:13px;color:#333;white-space:nowrap">12</div>
<div class="abs" style="left:193px;top:60.8px;font-size:11px;line-height:13px;color:#333;white-space:nowrap">20:02</div>
<div class="abs" style="left:74.25px;top:83.85px;width:18.500px;height:18.500px;border:1px solid #c58ad3;border-radius:50%;background:#fff;color:#b27cc2;font-size:10px;line-height:17.500px;text-align:center">2</div>
<div class="abs" style="left:103.5px;top:89.8px;font-size:11px;line-height:13px;color:#333;white-space:nowrap">8</div>
<div class="abs" style="left:193px;top:86.1px;font-size:11px;line-height:13px;color:#333;white-space:nowrap">20:50</div>
<div class="abs" style="left:74.25px;top:109.15px;width:18.500px;height:18.500px;border:1px solid #c58ad3;border-radius:50%;background:#fff;color:#b27cc2;font-size:10px;line-height:17.500px;text-align:center">3</div>
<div class="abs" style="left:103.5px;top:115.1px;font-size:11px;line-height:13px;color:#333;white-space:nowrap">14</div>
<div class="abs" style="left:193px;top:111.4px;font-size:11px;line-height:13px;color:#333;white-space:nowrap">21:14</div>
<svg class="abs" style="left:173.7px;top:155px" width="15" height="27" viewBox="0 0 15 27">
<path d="M3 1.500 Q7.500 -0.800 12 1.500 Q14.200 3.500 14 9 L14 22 Q14 25.500 11.800 26.300 L3.200 26.300 Q1 25.500 1 22 L1 9 Q0.800 3.500 3 1.500Z" fill="#e0342b"/>
<path d="M3 1.800 Q7.500 0 12 1.800 Q13.200 3 13.300 6 Q7.500 3.600 1.700 6 Q1.800 3 3 1.800Z" fill="#ef5350"/>
<path d="M2.600 8 Q7.500 5.400 12.400 8 L11.400 12 L3.600 12Z" fill="#3b2b2b"/>
<rect x="3.300" y="12" width="8.400" height="7.600" fill="#fbe4e1"/>
<path d="M3.400 19.800 L11.600 19.800 L12.200 23 Q7.500 24.600 2.800 23Z" fill="#3b2b2b"/>
<rect x="0" y="8.600" width="1.600" height="2" fill="#c62828"/><rect x="13.400" y="8.600" width="1.600" height="2" fill="#c62828"/>
</svg>
</div>
</body>
</html>
